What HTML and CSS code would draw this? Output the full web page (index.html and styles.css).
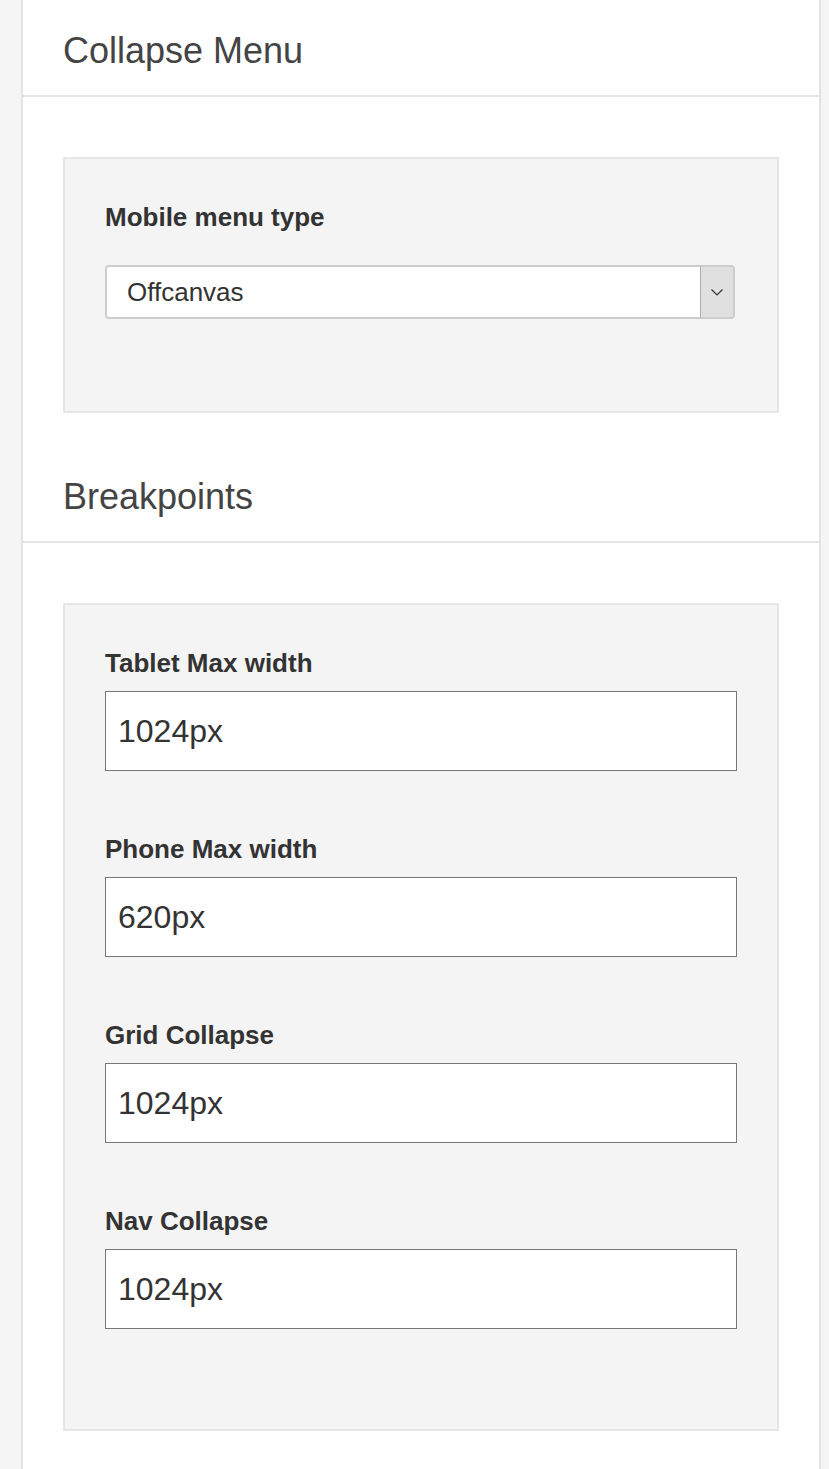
FILE: index.html
```html
<!DOCTYPE html>
<html lang="en">
<head>
    <meta charset="UTF-8">
    <meta name="viewport" content="width=device-width, initial-scale=1.0">
    <title>Menu Settings</title>
    <link rel="stylesheet" href="styles.css">
</head>
<body>
    <div class="panel">
        <div class="section-head">
            <h2>Collapse Menu</h2>
        </div>
        <div class="fieldset fieldset-menu">
            <div class="field">
                <label for="menuType">Mobile menu type</label>
                <div class="select-wrap">
                    <select id="menuType">
                        <option value="offcanvas">Offcanvas</option>
                        <option value="dropdown">Dropdown</option>
                    </select>
                    <span class="select-arrow">
                        <svg width="12" height="7" viewBox="0 0 12 7"><path d="M0.5 0.5 L6 6 L11.5 0.5" fill="none" stroke="#333" stroke-width="1.2"/></svg>
                    </span>
                </div>
            </div>
        </div>

        <div class="section-head section-head-next">
            <h2>Breakpoints</h2>
        </div>
        <div class="fieldset fieldset-breakpoints">
            <div class="field">
                <label for="tabletWidth">Tablet Max width</label>
                <input type="text" id="tabletWidth" value="1024px">
            </div>
            <div class="field">
                <label for="phoneWidth">Phone Max width</label>
                <input type="text" id="phoneWidth" value="620px">
            </div>
            <div class="field">
                <label for="gridCollapse">Grid Collapse</label>
                <input type="text" id="gridCollapse" value="1024px">
            </div>
            <div class="field">
                <label for="navCollapse">Nav Collapse</label>
                <input type="text" id="navCollapse" value="1024px">
            </div>
        </div>
    </div>
</body>
</html>
```

FILE: styles.css
```css
* {
    box-sizing: border-box;
}

body {
    margin: 0;
    background-color: #f5f5f5;
    font-family: "Liberation Sans", Arial, sans-serif;
    color: #333;
}

.panel {
    width: 800px;
    min-height: 1469px;
    margin-left: 21px;
    background-color: #fff;
    border-left: 2px solid #e3e3e3;
    border-right: 2px solid #e3e3e3;
}

.section-head {
    padding: 30px 40px 24px;
    border-bottom: 2px solid #e5e5e5;
}

.section-head-next {
    padding-top: 63px;
}

.section-head h2 {
    margin: 0;
    font-size: 36px;
    font-weight: normal;
    line-height: 41px;
    color: #444;
}

.fieldset {
    margin: 60px 40px 0;
    padding: 43px 40px 100px;
    background-color: #f4f4f4;
    border: 2px solid #e6e6e6;
}

.fieldset-menu {
    padding-bottom: 92px;
}

.fieldset-breakpoints {
    display: flex;
    flex-direction: column;
    gap: 63px;
}

.field label {
    display: block;
    margin-bottom: 13px;
    font-size: 26px;
    font-weight: bold;
    line-height: 30px;
    color: #333;
}

.fieldset-menu label {
    margin-bottom: 33px;
}

.select-wrap {
    display: flex;
    width: calc(100% - 2px);
    height: 54px;
    background-color: #fff;
    border: 2px solid #cdcdcd;
    border-radius: 4px;
    overflow: hidden;
}

.select-wrap select {
    flex: 1;
    height: 100%;
    padding: 0 0 0 20px;
    border: none;
    background: transparent;
    font-family: inherit;
    font-size: 26px;
    color: #333;
    appearance: none;
    -webkit-appearance: none;
    outline: none;
}

.select-arrow {
    display: flex;
    align-items: center;
    justify-content: center;
    width: 33px;
    background-color: #e0e0e0;
    border-left: 1px solid #ababab;
}

.field input {
    display: block;
    width: 100%;
    height: 80px;
    padding: 0 12px;
    border: 1px solid #777;
    background-color: #fff;
    font-family: inherit;
    font-size: 32px;
    color: #333;
    outline: none;
}
```
